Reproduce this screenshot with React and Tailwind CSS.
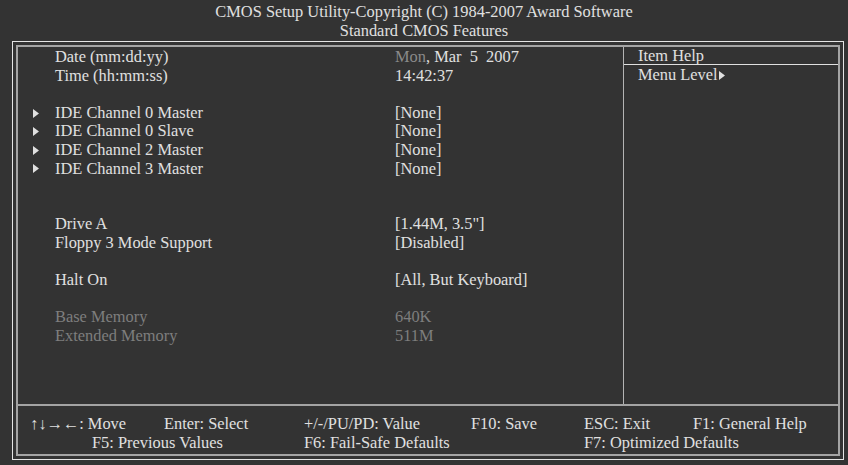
import React from 'react';

const Tri = ({ className }) => (
  <svg width="6" height="9" viewBox="0 0 6 9" className={className}>
    <path d="M0 0 L6 4.5 L0 9 Z" fill="#e0e0e0" />
  </svg>
);

const rows = [
  { label: 'Date (mm:dd:yy)', value: <><span className="text-[#8a8a8a]">Mon</span>, Mar&nbsp; 5&nbsp; 2007</> },
  { label: 'Time (hh:mm:ss)', value: '14:42:37' },
  null,
  { label: 'IDE Channel 0 Master', value: '[None]', arrow: true },
  { label: 'IDE Channel 0 Slave', value: '[None]', arrow: true },
  { label: 'IDE Channel 2 Master', value: '[None]', arrow: true },
  { label: 'IDE Channel 3 Master', value: '[None]', arrow: true },
  null,
  null,
  { label: 'Drive A', value: '[1.44M, 3.5"]' },
  { label: 'Floppy 3 Mode Support', value: '[Disabled]' },
  null,
  { label: 'Halt On', value: '[All, But Keyboard]' },
  null,
  { label: 'Base Memory', value: '640K', dim: true },
  { label: 'Extended Memory', value: '511M', dim: true },
];

const App = () => {
  return (
    <div
      className="w-[848px] h-[465px] bg-[#333333] text-[#e0e0e0] text-[16.4px] leading-[19px] overflow-hidden"
      style={{ fontFamily: '"Liberation Serif", "Times New Roman", serif' }}
    >
      <div className="pt-[2px] text-center">
        <div>CMOS Setup Utility-Copyright (C) 1984-2007 Award Software</div>
        <div>Standard CMOS Features</div>
      </div>

      <div className="ml-[12px] mt-[1px] w-[832px] h-[419px] border border-[#e4e4e4] p-[3px]">
        <div className="h-full border-2 border-[#a4a4a4] flex flex-col">
          <div className="h-[357px] flex">
            <div className="w-[606px] border-r border-[#b4b4b4] pt-px leading-[18.6px]">
              {rows.map((r, i) =>
                r ? (
                  <div key={i} className={`flex h-[18.6px] items-center ${r.dim ? 'text-[#7e7e7e]' : ''}`}>
                    <div className="w-[37px] pl-[15px] flex items-center">
                      {r.arrow && <Tri />}
                    </div>
                    <div className="w-[340px] whitespace-nowrap">{r.label}</div>
                    <div className="whitespace-nowrap">{r.value}</div>
                  </div>
                ) : (
                  <div key={i} className="h-[18.6px]" />
                )
              )}
            </div>
            <div className="flex-1">
              <div className="h-[18px] pl-[14px] border-b border-[#e0e0e0] leading-[17px]">Item Help</div>
              <div className="pl-[14px] pt-px leading-[18.6px] flex items-center">
                Menu Level<Tri className="ml-px" />
              </div>
            </div>
          </div>

          <div className="flex-1 border-t-2 border-[#a4a4a4] pt-[8px] whitespace-nowrap">
            <div className="flex pl-[12px]">
              <span className="w-[134px]">↑↓→←: Move</span>
              <span className="w-[140px]">Enter: Select</span>
              <span className="w-[167px]">+/-/PU/PD: Value</span>
              <span className="w-[113px]">F10: Save</span>
              <span className="w-[109px]">ESC: Exit</span>
              <span>F1: General Help</span>
            </div>
            <div className="flex pl-[74px]">
              <span className="w-[212px]">F5: Previous Values</span>
              <span className="w-[280px]">F6: Fail-Safe Defaults</span>
              <span>F7: Optimized Defaults</span>
            </div>
          </div>
        </div>
      </div>
    </div>
  );
};

export default App;
